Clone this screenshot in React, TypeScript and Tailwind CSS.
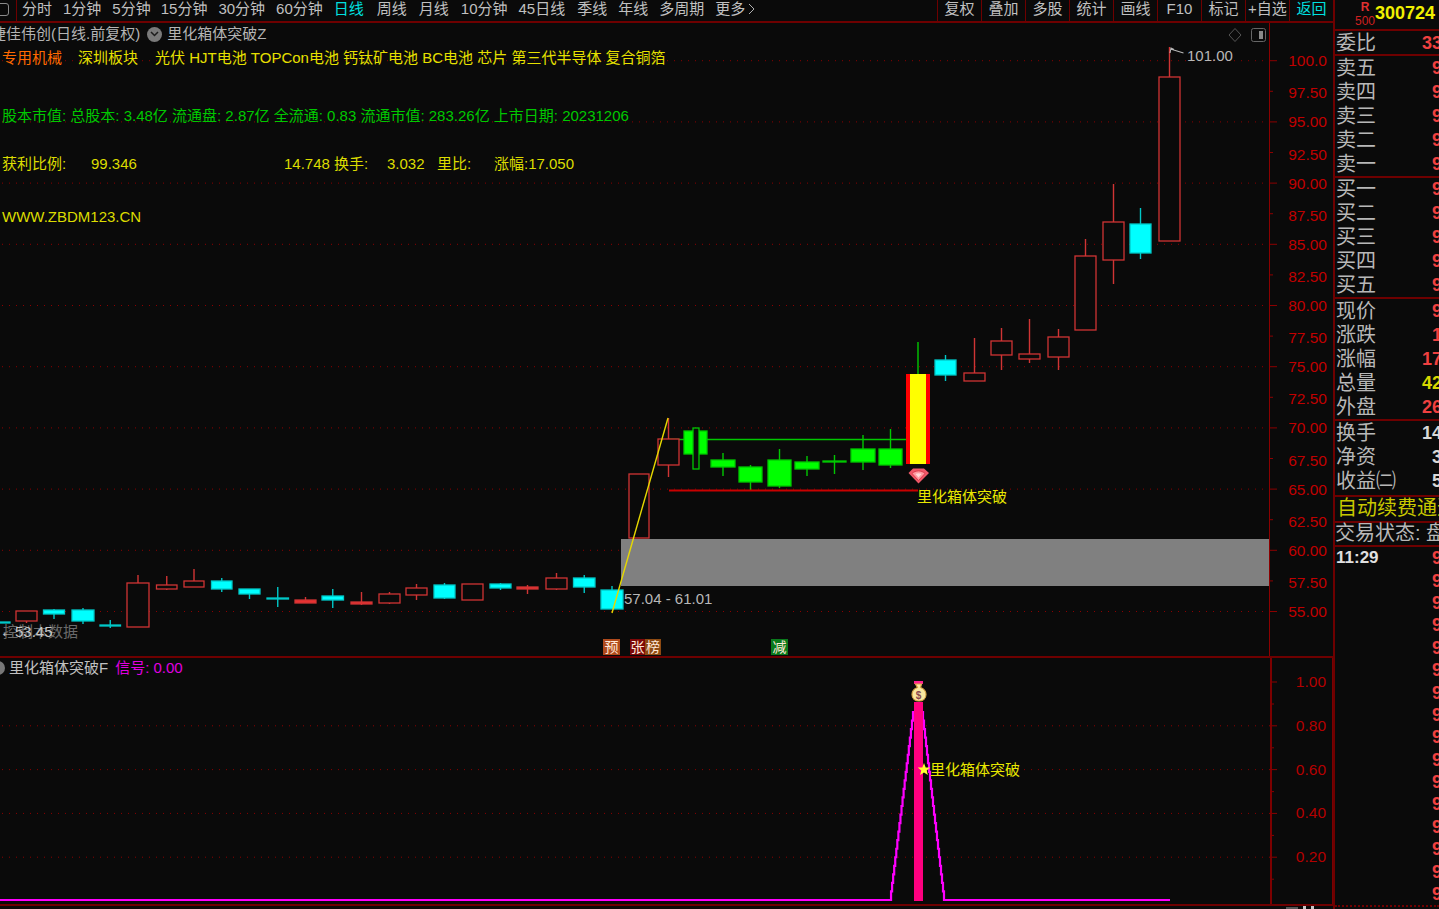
import { FC } from "react";

type Kind = "up" | "down" | "solid" | "green";
type Candle = [number, number, number, number, number, number, Kind];

// x0, x1, bodyTop, bodyBottom, wickTop, wickBottom, kind
const candles: Candle[] = [
  [-8, 10, 622, 623, 622, 623, "down"],
  [16, 37, 611, 621, 611, 623, "up"],
  [43.5, 64.5, 610, 614, 609, 619, "down"],
  [72, 94, 610, 621, 608, 624, "down"],
  [100, 120.5, 625, 626, 620, 628, "down"],
  [127, 149, 583, 627, 575, 627, "up"],
  [156.5, 177, 585, 589, 576, 590, "up"],
  [184, 204, 581, 587, 569, 587, "up"],
  [211.5, 232, 581, 589, 578, 592, "down"],
  [239, 260, 589, 594, 589, 599, "down"],
  [267, 288.5, 598, 599, 587, 607, "down"],
  [295, 316, 600, 603, 597, 603, "solid"],
  [322, 343.5, 596, 600, 589, 608, "down"],
  [351, 372, 602, 604, 592, 605, "solid"],
  [379, 400, 594, 603, 592, 604, "up"],
  [406, 427, 588, 595, 584, 600, "up"],
  [434, 455, 585, 598, 583, 599, "down"],
  [462, 483, 584, 600, 584, 600, "up"],
  [490, 511, 584, 588, 583, 590, "down"],
  [517, 538, 587, 589, 585, 594, "solid"],
  [546, 567, 578, 589, 573, 590, "up"],
  [573.5, 595, 578, 587, 575, 593, "down"],
  [601, 623, 590, 609, 586, 609, "down"],
  [629, 649, 474, 538, 474, 538, "up"],
  [658, 679, 439, 465, 418, 477, "up"],
  [684, 707, 431, 454, 431, 454, "green"],
  [711, 735, 460, 467, 453, 476, "green"],
  [739, 762, 467, 482, 465, 490, "green"],
  [768, 791, 460, 486, 449, 488, "green"],
  [795, 819, 462, 469, 456, 476, "green"],
  [823, 846, 461, 462, 455, 474, "green"],
  [851, 875, 449, 462, 435, 470, "green"],
  [879, 902, 449, 465, 429, 468, "green"],
  [935, 956, 360, 375, 355, 381, "down"],
  [964, 985, 373, 381, 338, 381, "up"],
  [991, 1012, 341, 355, 328, 370, "up"],
  [1019, 1040, 354, 359, 319, 363, "up"],
  [1048, 1069, 337, 357, 329, 370, "up"],
  [1075, 1096, 256, 330, 239, 330, "up"],
  [1103, 1124, 222, 260, 184, 284, "up"],
  [1130, 1151, 224, 253, 208, 259, "down"],
  [1159, 1180, 77, 241, 47, 241, "up"],
];

const priceLabels = ["100.0", "97.50", "95.00", "92.50", "90.00", "87.50", "85.00", "82.50", "80.00", "77.50", "75.00", "72.50", "70.00", "67.50", "65.00", "62.50", "60.00", "57.50", "55.00"];
const indicatorLabels = ["1.00", "0.80", "0.60", "0.40", "0.20"];

const tabsLeft = [
  { t: "分时", c: "" },
  { t: "1分钟", c: "" },
  { t: "5分钟", c: "" },
  { t: "15分钟", c: "-ml-px" },
  { t: "30分钟", c: "" },
  { t: "60分钟", c: "" },
  { t: "日线", c: "text-[#00e0e0]" },
  { t: "周线", c: "ml-[2px]" },
  { t: "月线", c: "ml-px" },
  { t: "10分钟", c: "ml-px" },
  { t: "45日线", c: "" },
  { t: "季线", c: "ml-px" },
  { t: "年线", c: "" },
  { t: "多周期", c: "" },
];
const tabsRight = ["复权", "叠加", "多股", "统计", "画线", "F10", "标记", "+自选", "返回"];

const CandleMark: FC<{ c: Candle }> = ({ c }) => {
  const [x0, x1, top, bottom, wickTop, wickBottom, kind] = c;
  const mid = (x0 + x1) / 2;
  const fill = kind === "down" ? "#00ffff" : kind === "green" ? "#00ff00" : kind === "solid" ? "#e83232" : "#0a0a0a";
  const stroke = kind === "down" ? "#00c8c8" : kind === "green" ? "#00c800" : "#d03434";
  return (
    <g>
      <line x1={mid} x2={mid} y1={wickTop} y2={wickBottom} stroke={stroke} strokeWidth={1.4} />
      <rect x={x0} y={top} width={x1 - x0} height={bottom - top} fill={fill} stroke={stroke} strokeWidth={1.3} />
    </g>
  );
};

const MainChart: FC = () => (
  <div className="relative h-[635px] border-b-2 border-[#6e0000]">
    <svg className="block w-[1333px] h-[633px]" viewBox="0 23 1333 633" style={{ fontFamily: '"Liberation Sans", "Noto Sans CJK SC", sans-serif' }}>
      {priceLabels.map((label, i) => {
        const y = 60.7 + i * 30.6;
        const major = i % 2 === 0;
        return (
          <g key={label}>
            {major && <line x1={2} x2={1269} y1={y} y2={y} stroke="#8c0000" strokeDasharray="1 6" />}
            <line x1={1269} x2={major ? 1277 : 1273} y1={y} y2={y} stroke="#8c0000" />
            <text x={1327} y={y + (major ? 5.5 : 7)} textAnchor="end" fontSize={15.5} fill="#c00000">
              {label}
            </text>
          </g>
        );
      })}
      <line x1={1269.5} x2={1269.5} y1={23} y2={656} stroke="#8c0000" />

      <rect x={621} y={539} width={648} height={47} fill="#808080" />
      <line x1={669} x2={906} y1={439.5} y2={439.5} stroke="#00c800" strokeWidth={1.4} />
      {candles.map((c) => (
        <CandleMark key={c[0]} c={c} />
      ))}
      <rect x={693} y={428} width={6} height={41} fill="#0a0a0a" stroke="#00c800" strokeWidth={1.3} />
      <line x1={669} x2={918} y1={490.5} y2={490.5} stroke="#c80000" strokeWidth={2} />
      <line x1={612} x2={668} y1={613} y2={418} stroke="#e6d800" strokeWidth={1.4} />

      {/* breakout candle */}
      <line x1={918} x2={918} y1={342} y2={374} stroke="#00c800" strokeWidth={1.4} />
      <rect x={906} y={374} width={24} height={90} fill="#ff0000" />
      <rect x={910} y={374} width={16} height={90} fill="#ffff00" />

      {/* gem */}
      <path d="M913 468.500h11l5 4.500-10.500 10.500L908.500 473z" fill="#f05868" />
      <path d="M912 473.500c3.500-3.500 9.500-3.500 13 0l-6.500 7z" fill="#ff9aa0" stroke="#d83848" strokeWidth={0.9} />
      <path d="M915.500 474c2-1 4-1 6 0l-3 3.500z" fill="#ffd8d8" />

      {/* top flag */}
      <path d="M1170 53l1-5 3 1.500M1170.500 49l13 4" fill="none" stroke="#b8b8b8" strokeWidth={1.1} />
      <text x={1187} y={60.500} fontSize={15} fill="#b8b8b8">
        101.00
      </text>
      <text x={624} y={604} fontSize={15} fill="#b8b8b8">
        57.04 - 61.01
      </text>
      <text x={917} y={502} fontSize={15} fill="#e8e800">
        里化箱体突破
      </text>

      {/* corner buttons */}
      <path d="M1235 28.500l6 6.500-6 6.500-6-6.500z" fill="none" stroke="#555555" />
      <rect x={1251.500} y={28.500} width={14} height={13} rx={2} fill="none" stroke="#666666" />
      <rect x={1259} y={31} width={4} height={8} fill="#8a8a8a" />
    </svg>

    <div className="absolute inset-0 text-[15px] leading-[22px] whitespace-pre">
      <div className="flex items-center -ml-[9px] text-[#b4b4b4]">
        <span>捷佳伟创(日线.前复权)</span>
        <span className="ml-[7px] w-[15px] h-[15px] rounded-full bg-[#7a7a7a] flex items-center justify-center text-[#222222]">
          <svg width="9" height="6" viewBox="0 0 9 6">
            <path d="M1 1l3.500 3.500L8 1" fill="none" stroke="#1c1c1c" strokeWidth="1.500" />
          </svg>
        </span>
        <span className="ml-[5px]">里化箱体突破Z</span>
      </div>
      <div className="mt-[2px] pl-[2px] flex text-[#e6e000]">
        <span className="text-[#ff6a00]">专用机械</span>
        <span className="ml-[16px]">深圳板块</span>
        <span className="ml-[17px]">光伏 HJT电池 TOPCon电池 钙钛矿电池 BC电池 芯片 第三代半导体 复合铜箔</span>
      </div>
      <div className="mt-[36px] pl-[2px] text-[#00c800]">股本市值: 总股本: 3.48亿 流通盘: 2.87亿 全流通: 0.83 流通市值: 283.26亿 上市日期: 20231206</div>
      <div className="mt-[26px] pl-[2px] flex text-[#dcdc00]">
        <span className="w-[89px]">获利比例:</span>
        <span className="w-[193px]">99.346</span>
        <span className="w-[103px]">14.748 换手:</span>
        <span className="w-[50px]">3.032</span>
        <span className="w-[57px]">里比:</span>
        <span>涨幅:17.050</span>
      </div>
      <div className="mt-[31px] pl-[2px] text-[#dcdc00]">WWW.ZBDM123.CN</div>
      <div className="absolute left-[3px] top-[598px] text-[#6a6a6a]">控制本数据</div>
      <div className="absolute left-0 top-[598px] text-[#c8c8c8]">←53.45</div>
      <div className="absolute left-[603px] top-[616px] flex text-[14px] leading-[16px] text-[#ffe8d8]">
        <span className="w-[17px] text-center bg-[#b04a1c]">预</span>
        <span className="ml-[10px] w-[15px] text-center bg-[#7c0808]">张</span>
        <span className="w-[16px] text-center bg-[#8e4a12]">榜</span>
        <span className="ml-[110px] w-[17px] text-center bg-[#0a7a1c]">减</span>
      </div>
    </div>
  </div>
);

const stepped = (x0: number, x1: number) => {
  const pts: string[] = [];
  const count = 22;
  for (let i = 0; i < count; i++) {
    const y = 900 - (188 * i) / count;
    const yNext = 900 - (188 * (i + 1)) / count;
    const x = x0 + ((x1 - x0) * (i + 1)) / count;
    pts.push(`${x},${y}`, `${x},${yNext}`);
  }
  return pts;
};

const IndicatorChart: FC = () => (
  <div className="relative h-[248px] border-b-2 border-[#6e0000]">
    <svg className="block w-[1333px] h-[246px]" viewBox="0 658 1333 246" style={{ fontFamily: '"Liberation Sans", "Noto Sans CJK SC", sans-serif' }}>
      {indicatorLabels.map((label, i) => {
        const y = 682 + i * 43.8;
        return (
          <g key={label}>
            {i > 0 && <line x1={2} x2={1270} y1={y} y2={y} stroke="#8c0000" strokeDasharray="1 6" />}
            <line x1={1271} x2={1277} y1={y} y2={y} stroke="#8c0000" />
            <line x1={1271} x2={1274} y1={y + 22} y2={y + 22} stroke="#8c0000" />
            <text x={1326} y={y + 5} textAnchor="end" fontSize={15.5} fill="#b40000">
              {label}
            </text>
          </g>
        );
      })}
      <line x1={1271} x2={1271} y1={658} y2={904} stroke="#7c0000" strokeWidth={2} />
      <line x1={1333} x2={1333} y1={658} y2={904} stroke="#7c0000" strokeWidth={2} />

      <polyline
        points={["0,900", "890,900", ...stepped(890, 913), ...stepped(945, 923).reverse(), "945,900", "1170,900"].join(" ")}
        fill="none"
        stroke="#ff00ff"
        strokeWidth={2.2}
      />
      <rect x={914} y={702} width={9} height={199} fill="#ff0080" />
      <rect x={914} y={681} width={9} height={3} fill="#ff2090" />

      {/* money bag */}
      <path d="M915.500 684h6l-1 3.500c4 1.500 5.500 4.500 5.500 7 0 4-3 6.500-7 6.500s-7-2.500-7-6.500c0-2.500 1.500-5.500 5.500-7z" fill="#f8e8a0" stroke="#d8a848" strokeWidth={1.2} />
      <text x={918.500} y={698.500} textAnchor="middle" fontSize={10} fontWeight={700} fill="#8a4a50">
        $
      </text>

      <path d="M924 763l1.700 4.400 4.600.2-3.600 2.900 1.200 4.500-3.900-2.600-3.900 2.600 1.200-4.500-3.600-2.900 4.600-.2z" fill="#ffff30" />
      <text x={930} y={775} fontSize={15} fill="#e8e800">
        里化箱体突破
      </text>
    </svg>

    <div className="absolute left-0 top-0 flex items-center text-[15px] leading-[20px] text-[#c0c0c0]">
      <span className="-ml-[9px] w-[14px] h-[14px] rounded-full bg-[#777777]" />
      <span className="ml-[4px]">里化箱体突破F</span>
      <span className="ml-[7px] text-[#e000e0]">信号: 0.00</span>
    </div>
  </div>
);

const Toolbar: FC = () => (
  <div className="flex h-[23px] shrink-0 border-b-2 border-[#6e0000] text-[15px] leading-[18px] text-[#c0c0c0] whitespace-pre">
    <div className="flex w-[17px] shrink-0 border-r border-[#6e0000] pt-[3px]">
      <span className="-ml-[5px] w-[14px] h-[13px] rounded-[3px] border border-[#8a8a8a]" />
    </div>
    <div className="flex gap-[11px] pl-[5px]">
      {tabsLeft.map(({ t, c }) => (
        <span key={t} className={c}>
          {t}
        </span>
      ))}
      <span className="flex items-start">
        更多
        <svg className="mt-[3px] ml-[3px]" width="7" height="12" viewBox="0 0 7 12">
          <path d="M1 1l5 5-5 5" fill="none" stroke="#b0b0b0" />
        </svg>
      </span>
    </div>
    <div className="ml-auto flex">
      {tabsRight.map((t) => (
        <span key={t} className={`w-[44px] text-center border-l border-[#6e0000] ${t === "返回" ? "text-[#00e0e0]" : ""}`}>
          {t}
        </span>
      ))}
    </div>
  </div>
);

const Row: FC<{ label: string; value?: string; tone?: string }> = ({ label, value, tone = "text-[#f04040]" }) => (
  <div className="flex h-[24px] w-[107px] items-center justify-between pl-px">
    <span>{label}</span>
    <span className={`font-bold text-[18px] ${tone}`}>{value}</span>
  </div>
);

const tailRows = Array.from({ length: 16 }, (_, i) => i);

const SidePanel: FC = () => (
  <div className="relative w-[106px] shrink-0 h-full overflow-hidden border-l-2 border-[#6e0000] text-[20px] leading-[24px] text-[#b8b8b8] whitespace-pre">
    <div className="relative flex h-[31px] items-center justify-end border-b-2 border-[#6e0000] pr-[4px] pb-[3px]">
      <div className="absolute left-[20px] top-0 w-[20px] text-center text-[#e03030] text-[12px] leading-[14px]">
        <div className="font-bold">R</div>
        <div className="text-[#d02020]">500</div>
      </div>
      <span className="font-bold text-[18px] text-[#f0f000]">300724</span>
    </div>
    <div className="border-b-2 border-[#6e0000] h-[25px]">
      <Row label="委比" value="33" />
    </div>
    <div className="border-b-2 border-[#6e0000]">
      {["卖五", "卖四", "卖三", "卖二", "卖一"].map((l) => (
        <Row key={l} label={l} value="9" />
      ))}
    </div>
    <div className="-mt-px border-b-2 border-[#6e0000]">
      {["买一", "买二", "买三", "买四", "买五"].map((l) => (
        <Row key={l} label={l} value="9" />
      ))}
    </div>
    <div className="border-b-2 border-[#6e0000]">
      <Row label="现价" value="9" />
      <Row label="涨跌" value="1" />
      <Row label="涨幅" value="17" />
      <Row label="总量" value="42" tone="text-[#d8d800]" />
      <Row label="外盘" value="26" />
    </div>
    <div className="border-b-2 border-[#6e0000] h-[76px]">
      <Row label="换手" value="14" tone="text-[#d8d8d8]" />
      <Row label="净资" value="3" tone="text-[#d8d8d8]" />
      <Row label="收益㈡" value="5" tone="text-[#d8d8d8]" />
    </div>
    <div className="h-[26px] border-b-2 border-[#6e0000] pl-[2px] leading-[23px] text-[#c8c800]">自动续费通道</div>
    <div className="h-[24px] border-b-2 border-[#6e0000] leading-[21px]">交易状态: 盘中</div>
    {tailRows.map((i) => (
      <div key={i} className="flex h-[22.4px] w-[107px] items-center justify-between pl-px text-[18px] leading-[22px] font-bold">
        <span className="text-[17px] text-[#e0e0e0]">{i === 0 ? "11:29" : ""}</span>
        <span className="text-[#f04040]">9</span>
      </div>
    ))}
    <div className="absolute left-0 top-[905px] w-full border-t-2 border-dotted border-[#6e0000]" />
  </div>
);

export default function App() {
  return (
    <div
      className="flex w-[1439px] h-[909px] overflow-hidden bg-[#0a0a0a]"
      style={{ fontFamily: '"Liberation Sans", "Noto Sans CJK SC", sans-serif' }}
    >
      <div className="flex w-[1333px] shrink-0 flex-col">
        <Toolbar />
        <MainChart />
        <IndicatorChart />
        <div className="flex items-start gap-[5px] pl-[1286px]">
          <span className="mt-px w-[12px] h-[2px] bg-[#555555]" />
          <span className="w-[3px] h-[3px] bg-[#c8c8c8]" />
          <span className="w-[3px] h-[3px] bg-[#c8c8c8]" />
        </div>
      </div>
      <SidePanel />
    </div>
  );
}
